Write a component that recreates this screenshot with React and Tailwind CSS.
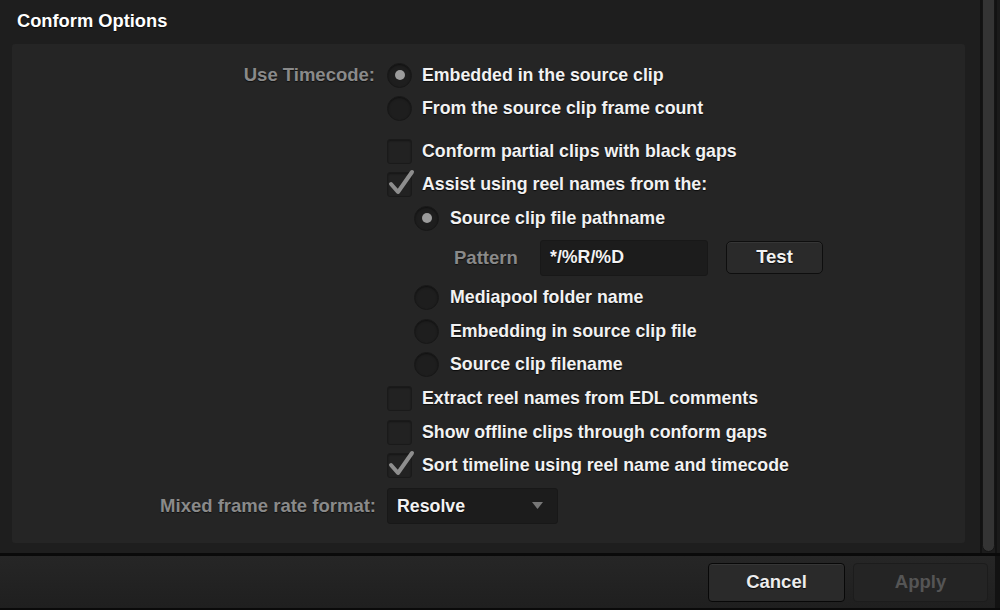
import React from "react"

const font = { fontFamily: '"Liberation Sans", Arial, sans-serif' }
const txt = "text-[17.75px] font-bold text-[#f2f2f2] [text-shadow:0_1px_1px_rgba(0,0,0,0.7)] whitespace-nowrap"
const lbl = "text-[18.5px] font-bold text-[#8a8a8a] [text-shadow:0_1px_1px_rgba(0,0,0,0.6)] whitespace-nowrap"
const btn = "text-[18.5px] font-bold [text-shadow:0_1px_1px_rgba(0,0,0,0.8)] whitespace-nowrap"

function Radio({ on }) {
  return (
    <div className="flex h-[25px] w-[25px] shrink-0 items-center justify-center rounded-full border border-[#181818] bg-[#1e1e1e] shadow-[inset_0_1px_2px_rgba(0,0,0,0.5)]">
      {on && <div className="h-[10px] w-[10px] rounded-full bg-[#9c9c9c]" />}
    </div>
  )
}

function Check({ on }) {
  return (
    <div className="relative h-[25px] w-[25px] shrink-0 rounded-[3px] border border-[#1a1a1a] bg-[#222222] shadow-[inset_0_1px_2px_rgba(0,0,0,0.4)]">
      {on && (
        <svg className="absolute -left-[1px] -top-[6px]" width="30" height="30" viewBox="0 0 30 30">
          <path d="M4 17 L11 25 L25 5" fill="none" stroke="#8e8e8e" strokeWidth="4" strokeLinecap="round" strokeLinejoin="round" />
        </svg>
      )}
    </div>
  )
}

function Row({ h = "h-[34px]", indent = false, children }) {
  return (
    <div className={`flex ${h} items-center`}>
      <div className="w-[375px] shrink-0" />
      <div className={`flex items-center ${indent ? "pl-[27px]" : ""}`}>{children}</div>
    </div>
  )
}

function CheckRow({ on, h, children }) {
  return (
    <Row h={h}>
      <Check on={on} />
      <span className={`${txt} ml-[10px]`}>{children}</span>
    </Row>
  )
}

function SubRadio({ on, h, children }) {
  return (
    <Row h={h} indent>
      <Radio on={on} />
      <span className={`${txt} ml-[11px]`}>{children}</span>
    </Row>
  )
}

export default function App() {
  return (
    <div className="flex h-[610px] w-[1000px] flex-col overflow-hidden bg-[#1e1e1e]" style={font}>
      <div className="flex h-[553px]">
        <div className="flex flex-1 flex-col">
          <div className="flex h-[44px] items-center pl-[17px] pb-[3px]">
            <h1 className="text-[18.3px] font-bold text-white [text-shadow:0_1px_1px_rgba(0,0,0,0.7)]">Conform Options</h1>
          </div>
          <div className="ml-[12px] mr-[15px] h-[499px] rounded-[3px] bg-[#252525] pt-[14px]">
            <div className="flex h-[34px] items-center">
              <div className={`${lbl} w-[375px] shrink-0 pr-[12px] text-right`}>Use Timecode:</div>
              <Radio on />
              <span className={`${txt} ml-[10px]`}>Embedded in the source clip</span>
            </div>
            <Row h="h-[33px]">
              <Radio />
              <span className={`${txt} ml-[10px]`}>From the source clip frame count</span>
            </Row>
            <div className="h-[9px]" />
            <CheckRow>Conform partial clips with black gaps</CheckRow>
            <CheckRow on h="h-[33px]">Assist using reel names from the:</CheckRow>
            <SubRadio on>Source clip file pathname</SubRadio>
            <Row h="h-[45px]" indent>
              <span className={`${lbl} ml-[40px] w-[86px]`}>Pattern</span>
              <div className="flex h-[36px] w-[168px] items-center rounded-[3px] border border-[#181818] bg-[#1c1c1c] pl-[9px]">
                <span className={txt}>*/%R/%D</span>
              </div>
              <button className="ml-[18px] flex h-[33px] w-[97px] items-center justify-center rounded-[5px] border border-[#0e0e0e] bg-[#2a2a2a] pb-[2px] shadow-[inset_0_1px_0_rgba(255,255,255,0.06)]">
                <span className={`${btn} text-[#f2f2f2]`}>Test</span>
              </button>
            </Row>
            <SubRadio>Mediapool folder name</SubRadio>
            <SubRadio>Embedding in source clip file</SubRadio>
            <SubRadio h="h-[33px]">Source clip filename</SubRadio>
            <CheckRow>Extract reel names from EDL comments</CheckRow>
            <CheckRow>Show offline clips through conform gaps</CheckRow>
            <CheckRow on h="h-[33px]">Sort timeline using reel name and timecode</CheckRow>
            <div className="mt-[6px] flex h-[36px] items-center">
              <div className={`${lbl} w-[375px] shrink-0 pr-[11px] text-right`}>Mixed frame rate format:</div>
              <div className="flex h-[36px] w-[171px] items-center justify-between rounded-[3px] border border-[#181818] bg-[#1c1c1c] pl-[9px] pr-[14px]">
                <span className={txt}>Resolve</span>
                <svg width="11" height="8" viewBox="0 0 11 8">
                  <path d="M0 0 L11 0 L5.5 7 Z" fill="#777777" />
                </svg>
              </div>
            </div>
          </div>
        </div>
        <div className="flex w-[20px] shrink-0">
          <div className="w-[2px] bg-[#121212]" />
          <div className="w-[13px] bg-[#1c1c1c]">
            <div className="-mt-[10px] h-[562px] rounded-b-full border border-[#151515] bg-[#343434]" />
          </div>
          <div className="w-[2px] bg-[#121212]" />
          <div className="flex-1 bg-[#1a1a1a]" />
        </div>
      </div>
      <div className="h-[3px] bg-[#0a0a0a]" />
      <div className="flex flex-1">
        <div className="flex flex-1 items-center justify-end gap-[8px] bg-gradient-to-b from-[#262626] to-[#1f1f1f] pr-[7px]">
          <button className="flex h-[39px] w-[137px] items-center justify-center rounded-[4px] border border-[#080808] bg-[#2a2a2a] shadow-[inset_0_1px_0_rgba(255,255,255,0.06)]">
            <span className={`${btn} text-[#ececec]`}>Cancel</span>
          </button>
          <button className="flex h-[39px] w-[135px] items-center justify-center rounded-[4px] border border-[#1c1c1c] bg-[#242424]">
            <span className="text-[18.5px] font-bold text-[#555555]">Apply</span>
          </button>
        </div>
        <div className="w-[5px] bg-[#121212]" />
      </div>
      <div className="h-[2px] bg-[#0a0a0a]" />
    </div>
  )
}
